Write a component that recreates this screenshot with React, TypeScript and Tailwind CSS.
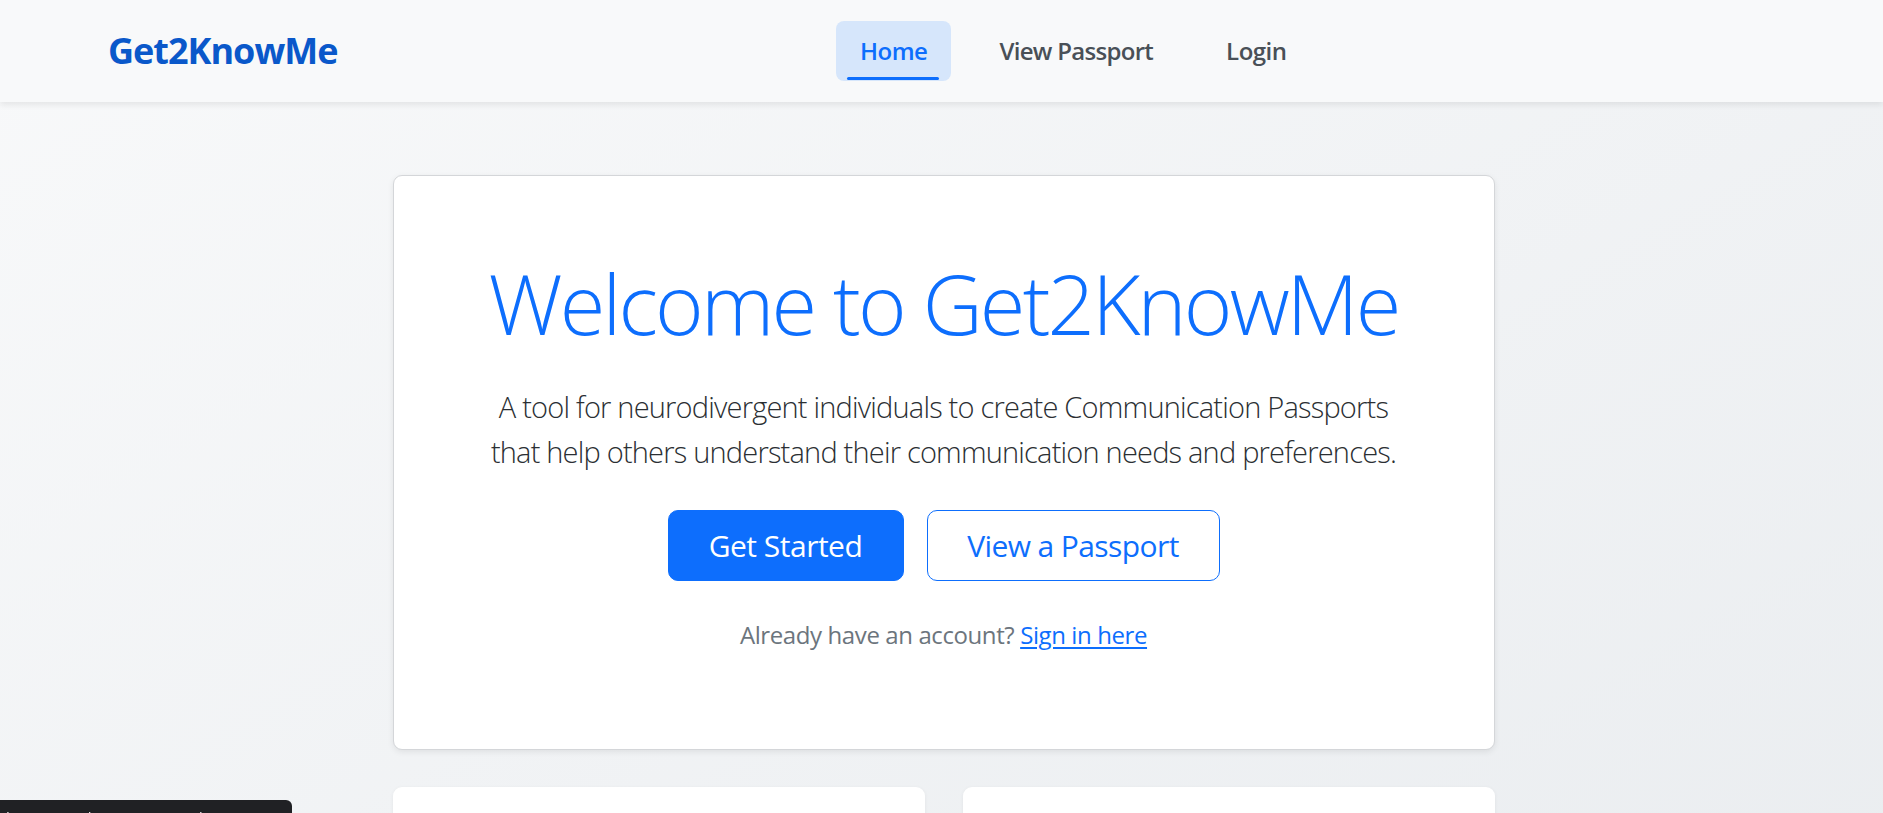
import React from 'react'

const font = { fontFamily: '"Open Sans", "Noto Sans", sans-serif' }

export default function App() {
  return (
    <div
      style={font}
      className="min-h-screen bg-gradient-to-br from-[#f8f9fa] to-[#e9ecef] text-[#212529]"
    >
      {/* Navbar */}
      <nav className="h-[102px] bg-[#f8f9fa] shadow-[0_3px_6px_rgba(0,0,0,0.08)] relative z-10">
        <div className="h-full flex items-center pl-[108px]">
          <a className="w-[228px] whitespace-nowrap text-[36px] font-bold text-[#0a58ca] leading-none tracking-[-1px]">
            Get2KnowMe
          </a>
          <ul className="flex items-center gap-[23px] ml-[500px]">
            <li className="relative h-[60px] px-[24px] flex items-center rounded-[8px] bg-[#d6e6fb] text-[#0d6efd] text-[24px] font-semibold tracking-[-0.5px]">
              Home
              <span className="absolute left-[11px] right-[12px] bottom-[1px] h-[3px] bg-[#0d6efd] rounded-sm" />
            </li>
            <li className="h-[60px] px-[25px] flex items-center text-[#495057] text-[24px] font-semibold tracking-[-0.7px]">
              View Passport
            </li>
            <li className="h-[60px] px-[25px] flex items-center text-[#495057] text-[24px] font-semibold tracking-[-0.5px]">
              Login
            </li>
          </ul>
        </div>
      </nav>

      {/* Main */}
      <main className="w-[1102px] mx-auto pt-[73px] relative left-[2px]">
        <section className="bg-white border border-[#d4d6d9] rounded-[9px] shadow-[0_2px_6px_rgba(0,0,0,0.08)] px-[60px] pt-[77px] pb-[96px] text-center">
          <h1 className="text-[83px] font-light leading-[1.2] text-[#0d6efd] mb-[31px] tracking-[-2.8px] whitespace-nowrap">
            Welcome to Get2KnowMe
          </h1>
          <p className="text-[29px] font-light leading-[45px] mb-[36px] tracking-[-0.8px] text-[#2b2f33] whitespace-nowrap">
            A tool for neurodivergent individuals to create Communication Passports
            <br />
            that help others understand their communication needs and preferences.
          </p>
          <div className="flex justify-center gap-[23px]">
            <button className="h-[71px] w-[236px] rounded-[10px] bg-[#0d6efd] border-[1.5px] border-[#0d6efd] text-white text-[30px] leading-[45px] tracking-[-0.5px]">
              Get Started
            </button>
            <button className="h-[71px] w-[293px] rounded-[10px] bg-white border-[1.5px] border-[#0d6efd] text-[#0d6efd] text-[30px] leading-[45px] tracking-[-0.6px]">
              View a Passport
            </button>
          </div>
          <p className="mt-[36px] text-[24px] leading-[36px] text-[#6c757d] tracking-[-0.4px]">
            Already have an account?{' '}
            <a className="text-[#0d6efd] underline underline-offset-[3px]">Sign in here</a>
          </p>
        </section>

        <div className="grid grid-cols-2 gap-[38px] mt-[37px]">
          <div className="h-[300px] bg-white rounded-[9px] shadow-[0_1px_4px_rgba(0,0,0,0.06)]" />
          <div className="h-[300px] bg-white rounded-[9px] shadow-[0_1px_4px_rgba(0,0,0,0.06)]" />
        </div>
      </main>

      {/* browser status bubble */}
      <div className="fixed left-0 bottom-0 w-[292px] h-[13px] bg-[#202124] rounded-tr-[6px] overflow-hidden z-20">
        <span className="block pl-[6px] pt-[8px] text-[15px] leading-[18px] text-[#e8eaed] whitespace-nowrap">
          https://get2knowme.onrender.com/passport
        </span>
      </div>
    </div>
  )
}
